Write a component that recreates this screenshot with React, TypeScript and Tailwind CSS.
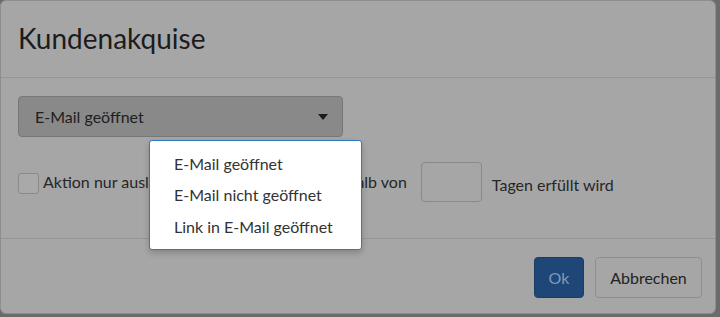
const options = ["E-Mail geöffnet", "E-Mail nicht geöffnet", "Link in E-Mail geöffnet"];

const App = () => {
  return (
    <div
      className="relative w-[720px] h-[317px] overflow-hidden bg-[#6b6b6b]"
      style={{ fontFamily: "Lato, 'Noto Sans', sans-serif" }}
    >
      {/* dialog under the backdrop */}
      <div className="w-[716px] h-[314px] rounded-[6px] bg-[#a6a6a6] border border-[#8e8e8e] flex flex-col">
        <div className="h-[77px] shrink-0 flex items-center pl-[17px] border-b border-[#959595]">
          <h1 className="text-[28px] leading-none text-[#1c1c1c] -mt-[2px]">Kundenakquise</h1>
        </div>

        <div className="px-[17px] pt-[18px] pb-[36px] border-b border-[#959595]">
          <div className="w-[325px] h-[41px] rounded-[4px] bg-[#898989] border border-[#777] flex items-center justify-between pl-[16px] pr-[14px]">
            <span className="text-[16px] text-[#202020]">E-Mail geöffnet</span>
            <svg width="10" height="6" viewBox="0 0 10 6" className="mt-[1px]">
              <path d="M0 0h10L5 6z" fill="#1a1a1a" />
            </svg>
          </div>

          <div className="mt-[25px] flex items-center">
            <span className="w-[21px] h-[21px] rounded-[3px] border border-[#8a8a8a] bg-[#a9a9a9] mt-[3px]" />
            <span className="ml-[4px] text-[16px] text-[#262626] whitespace-nowrap">
              Aktion nur auslösen, wenn Bedingung innerhalb von
            </span>
            <span className="ml-[14px] w-[61px] h-[40px] rounded-[4px] border border-[#8a8a8a]" />
            <span className="ml-[10px] text-[16px] text-[#262626] mt-[6px]">Tagen erfüllt wird</span>
          </div>
        </div>

        <div className="flex justify-end gap-[11px] pt-[18px] pr-[13px]">
          <button className="w-[50px] h-[41px] rounded-[4px] bg-[#1e4677] border border-[#1a3d68] text-[16px] text-[#8199b8]">
            Ok
          </button>
          <button className="w-[107px] h-[41px] rounded-[4px] border border-[#8e8e8e] text-[16px] text-[#222]">
            Abbrechen
          </button>
        </div>
      </div>

      {/* open dropdown */}
      <div className="absolute left-[149px] top-[140px] w-[213px] h-[110px] bg-white rounded-[3px] border border-[#2b7bc0] shadow-[0_3px_6px_rgba(0,0,0,0.2)] pt-[7px]">
        {options.map((o) => (
          <div key={o} className="h-[31.5px] flex items-center pl-[24px] text-[16px] text-[#333]">
            {o}
          </div>
        ))}
      </div>
    </div>
  );
};

export default App;
